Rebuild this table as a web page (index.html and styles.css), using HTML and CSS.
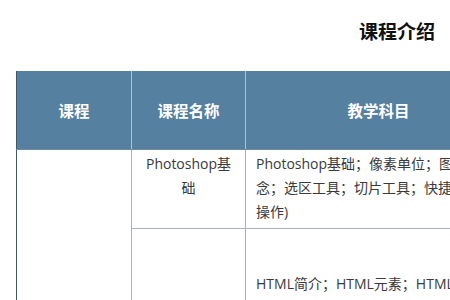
FILE: index.html
```html
<!DOCTYPE html>
<html lang="zh">
<head>
<meta charset="utf-8">
<link rel="stylesheet" href="styles.css">
</head>
<body>
<div class="page">
  <h1 class="title">课程介绍</h1>
  <table class="course">
    <colgroup>
      <col class="c1"><col class="c2"><col class="c3"><col class="c4">
    </colgroup>
    <thead>
      <tr><th>课程</th><th>课程名称</th><th>教学科目</th><th>课时</th></tr>
    </thead>
    <tbody>
      <tr>
        <td rowspan="2" class="stage"></td>
        <td class="name">Photoshop基础</td>
        <td class="subj">Photoshop基础；像素单位；图层概念；选区工具；切片工具；快捷键(常见操作)</td>
        <td class="hours">2天</td>
      </tr>
      <tr class="tall">
        <td class="name"></td>
        <td class="subj">HTML简介；HTML元素；HTML属性；HTML标题；HTML段落；HTML样式</td>
        <td class="hours">5天</td>
      </tr>
    </tbody>
  </table>
</div>
</body>
</html>
```
FILE: styles.css
```css
html, body {
  margin: 0;
  padding: 0;
  background: #ffffff;
  overflow: hidden;
}
body {
  font-family: "Open Sans", "Noto Sans CJK TC", sans-serif;
  color: #3a3a3a;
}
.page {
  width: 762px;
  margin-left: 16px;
  padding-top: 17px;
}
.title {
  margin: 0;
  font-family: "Noto Sans CJK SC", sans-serif;
  font-size: 19px;
  font-weight: 700;
  line-height: 28px;
  color: #111;
  text-align: center;
  height: 54px;
}
.course {
  border-collapse: collapse;
  table-layout: fixed;
  width: 762px;
  border-left: 1px solid #3e5866;
}
.c1 { width: 115px; }
.c2 { width: 114px; }
.c3 { width: 266px; }
.c4 { width: 267px; }
.course th {
  height: 78px;
  padding: 0;
  background: #5580a0;
  color: #fff;
  font-family: "Noto Sans CJK SC", sans-serif;
  font-size: 15.5px;
  font-weight: 700;
  border-left: 1px solid #a9c3d8;
  border-bottom: 1px solid #6e8aa0;
}
.course th:first-child { border-left: none; }
.course td {
  font-size: 14px;
  line-height: 24px;
  padding: 2px 10px 4px;
  border: 1px solid #a4b2bf;
  vertical-align: middle;
}
.course td.stage { border-left: none; }
.course td.name { text-align: center; vertical-align: top; padding: 2px 10px 4px; }
.course td.subj { text-align: left; }
.course tr.tall td { height: 130px; }
```
